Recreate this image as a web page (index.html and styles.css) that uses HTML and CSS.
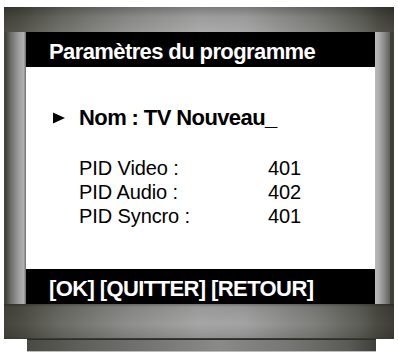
FILE: index.html
```html
<!DOCTYPE html>
<html lang="fr">
<head>
<meta charset="utf-8">
<title>Paramètres du programme</title>
<link rel="stylesheet" href="styles.css">
</head>
<body>
<div class="tv">
  <div class="frame">
    <div class="band band-top"></div>
    <div class="middle">
      <div class="strip strip-left"></div>
      <div class="screen">
        <div class="bar bar-head">Paramètres du programme</div>
        <div class="content">
          <div class="name-row">
            <svg class="arrow" width="12" height="12" viewBox="0 0 12 12"><polygon points="0,0.5 12,6 0,11.5" fill="#000"/></svg>
            <span class="name">Nom : TV Nouveau_</span>
          </div>
          <div class="pids">
            <span>PID Video :</span><span>401</span>
            <span>PID Audio :</span><span>402</span>
            <span>PID Syncro :</span><span>401</span>
          </div>
        </div>
        <div class="bar bar-foot">[OK] [QUITTER] [RETOUR]</div>
      </div>
      <div class="strip strip-right"></div>
    </div>
    <div class="band band-bottom"></div>
  </div>
  <div class="stand"></div>
</div>
</body>
</html>
```

FILE: styles.css
```css
html, body {
  margin: 0;
  padding: 0;
  background: #fff;
}
body {
  font-family: "Liberation Sans", Arial, Helvetica, sans-serif;
}
.tv {
  padding: 7px 0 0 4px;
  width: 390px;
}
.frame {
  width: 390px;
  height: 332px;
  display: flex;
  flex-direction: column;
  background: linear-gradient(90deg, #44443c 0%, #4c4c44 4%, #6a6a64 14%, #8e8e8c 32%, #a6a6a6 50%, #a2a2a2 62%, #7e7e7a 80%, #5c5c56 92%, #494942 96%, #3e3e36 100%);
}
.band-top {
  height: 25px;
  background: linear-gradient(180deg, rgba(0,0,0,0.25) 0%, rgba(0,0,0,0.05) 40%, rgba(255,255,255,0.05) 100%);
}
.band-bottom {
  height: 35px;
  background: linear-gradient(180deg, rgba(0,0,0,0.3) 0px, rgba(0,0,0,0.08) 3px, rgba(0,0,0,0) 20px, rgba(0,0,0,0.12) 100%);
  border-bottom: 1px solid #3a3a34;
  box-sizing: border-box;
}
.middle {
  display: flex;
  height: 272px;
  padding: 0 4px 0 3px;
}
.strip {
  height: 272px;
}
.strip-left {
  width: 19px;
  background: linear-gradient(90deg, #4e4e4a 0%, #6c6c6a 20%, #9c9c9c 60%, #b0b0b0 88%, #6a6a6a 100%);
}
.strip-right {
  width: 15px;
  background: linear-gradient(90deg, #bcbcbc 0%, #a8a8a8 30%, #868686 65%, #5e5e5a 100%);
}
.screen {
  width: 349px;
  height: 272px;
  background: #fff;
  display: flex;
  flex-direction: column;
}
.bar {
  height: 35px;
  box-sizing: border-box;
  background: #000;
  color: #fff;
  font-weight: bold;
  font-size: 22px;
  letter-spacing: -0.6px;
  line-height: 24px;
  padding: 8px 0 0 23px;
  white-space: nowrap;
}
.content {
  height: 202px;
  box-sizing: border-box;
  padding: 39px 0 0 27px;
  color: #000;
}
.name-row {
  display: flex;
  align-items: center;
  gap: 14px;
  height: 24px;
}
.arrow {
  display: block;
  flex: none;
}
.name {
  font-weight: bold;
  font-size: 22px;
  letter-spacing: -0.6px;
  line-height: 24px;
  white-space: nowrap;
}
.pids {
  margin-top: 26px;
  margin-left: 26px;
  display: grid;
  grid-template-columns: 189px auto;
  font-size: 20px;
  letter-spacing: -0.1px;
  line-height: 24px;
  white-space: nowrap;
}
.stand {
  margin-left: 23px;
  width: 349px;
  height: 13px;
  box-sizing: border-box;
  border-top: 1px solid #2e2e2a;
  border-bottom: 1px solid #bdbdbd;
  background: linear-gradient(90deg, #4a4a44 0%, #5e5e5a 15%, #7a7a78 40%, #8a8a88 55%, #767674 75%, #5a5a56 92%, #3e3e3a 100%);
}
```
